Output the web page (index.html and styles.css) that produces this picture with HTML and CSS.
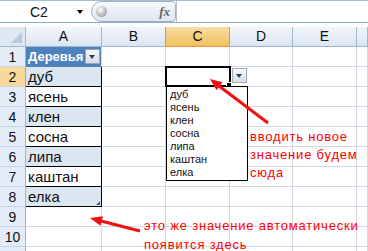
FILE: index.html
```html
<!DOCTYPE html>
<html lang="ru">
<head>
    <meta charset="UTF-8">
    <meta name="viewport" content="width=device-width, initial-scale=1.0">
    <title>Список</title>
    <link rel="stylesheet" href="styles.css">
</head>
<body>
    <div class="fbar">
        <div class="namebox"><span>C2</span><span class="nb-arrow"></span></div>
        <div class="fxbtn"><span class="knob"></span><span class="fx">fx</span></div>
        <div class="finput"></div>
    </div>
    <div class="sheet" id="sheet"></div>

    <div class="selbox"></div>
    <div class="ddbtn"></div>
    <div class="ddlist">
        <div>дуб</div>
        <div>ясень</div>
        <div>клен</div>
        <div>сосна</div>
        <div>липа</div>
        <div>каштан</div>
        <div>елка</div>
    </div>

    <div class="note note1">вводить новое<br>значение будем<br>сюда</div>
    <div class="note note2">это же значение автоматически<br>появится здесь</div>

    <svg class="arrows" width="368" height="251" viewBox="0 0 368 251">
        <line x1="268" y1="123" x2="219" y2="86" />
        <polygon points="210,79 222.6,82.3 216.5,90.3" />
        <line x1="140" y1="231" x2="101" y2="221" />
        <polygon points="90,218 102.9,216.2 100.4,225.8" />
    </svg>

  <script>
    const datos = ["Деревья", "дуб", "ясень", "клен", "сосна", "липа", "каштан", "елка"];
    const cols = ["A", "B", "C", "D", "E", ""];

    function dibujarHoja() {
        let html = "<div class='corner'></div>";
        for (let i = 0; i < cols.length; i++) {
            html += "<div class='ch" + (cols[i] == "C" ? " sel" : "") + "'>" + cols[i] + "</div>";
        }
        for (let r = 1; r <= 11; r++) {
            // la fila 11 queda cortada abajo, sin numero visible
            html += "<div class='rh" + (r == 2 ? " sel" : "") + "'>" + (r <= 10 ? r : "") + "</div>";
            if (r == 1) {
                html += "<div class='c head'>" + datos[0] + "<span class='filter'></span></div>";
            } else if (r <= 8) {
                html += "<div class='c t" + (r % 2 == 0 ? " band" : "") + "'>" + datos[r - 1] +
                    (r == 8 ? "<span class='grip'></span>" : "") + "</div>";
            } else {
                html += "<div class='c'></div>";
            }
            for (let k = 1; k < cols.length; k++) {
                html += "<div class='c'></div>";
            }
        }
        document.getElementById("sheet").innerHTML = html;
    }

    dibujarHoja();
  </script>
</body>
</html>
```
FILE: styles.css
```css
* {
    box-sizing: border-box;
}
body {
    margin: 0;
    width: 368px;
    height: 251px;
    overflow: hidden;
    position: relative;
    background-color: #fff;
    font-family: "Liberation Sans", Arial, sans-serif;
    color: #111;
}

/* barra de formulas */
.fbar {
    display: flex;
    height: 23px;
    border-top: 1px solid #a9bcd5;
    border-bottom: 1px solid #92a7c3;
    margin-bottom: 4px;
}
.namebox {
    width: 91px;
    display: flex;
    align-items: center;
    padding-left: 30px;
    font-size: 14px;
}
.nb-arrow {
    margin-left: auto;
    margin-right: 8px;
    width: 0;
    height: 0;
    border-left: 3.5px solid transparent;
    border-right: 3.5px solid transparent;
    border-top: 4px solid #000;
}
.fxbtn {
    width: 85px;
    display: flex;
    align-items: center;
    border: 1px solid #9fb1c9;
    border-radius: 11px 4px 4px 11px;
    background: linear-gradient(#f7f9fc, #dde5f0);
}
.knob {
    width: 11px;
    height: 11px;
    margin-left: 4px;
    border-radius: 50%;
    background: radial-gradient(circle at 40% 35%, #ffffff, #b4b4b4 60%, #8c8c8c);
}
.fx {
    margin-left: auto;
    margin-right: 5px;
    font-family: "Liberation Serif", serif;
    font-style: italic;
    font-weight: bold;
    font-size: 13px;
    color: #666;
}
.finput {
    flex: 1;
    border-left: 1px solid #b6c2d2;
}

/* hoja */
.sheet {
    display: grid;
    grid-template-columns: 26px 76px 64px 64px 63px 64px 1fr;
    grid-auto-rows: 20px;
}
.corner {
    position: relative;
    background: #dfe7f3;
    border-right: 1px solid #9eb6ce;
    border-bottom: 1px solid #9eb6ce;
}
.corner::after {
    content: "";
    position: absolute;
    right: 3px;
    bottom: 3px;
    width: 11px;
    height: 11px;
    background: #b9cae0;
    clip-path: polygon(100% 0, 100% 100%, 0 100%);
}
.ch {
    background: linear-gradient(#f3f6fb, #dce5f1);
    border-right: 1px solid #9eb6ce;
    border-bottom: 1px solid #9eb6ce;
    text-align: center;
    font-size: 14px;
    line-height: 19px;
}
.ch.sel {
    background: linear-gradient(#f9dba3, #f1c15f);
    border-right-color: #f29536;
    border-bottom-color: #f29536;
    box-shadow: -1px 0 0 #f29536;
}
.rh {
    background: #e4ecf7;
    border-right: 1px solid #9eb6ce;
    border-bottom: 1px solid #c5d3e6;
    text-align: center;
    font-size: 14px;
    line-height: 20px;
}
.rh.sel {
    background: #f9d99b;
    border-right-color: #f29536;
}
.c {
    position: relative;
    border-right: 1px solid #d0d7e5;
    border-bottom: 1px solid #d0d7e5;
    padding-left: 2px;
    font-size: 15px;
    line-height: 20px;
}
.c.head {
    display: flex;
    align-items: center;
    background: #4f81bd;
    border-bottom-color: #4f81bd;
    color: #fff;
    font-weight: bold;
    font-size: 13px;
}
.filter {
    position: relative;
    margin-left: auto;
    margin-right: 1px;
    width: 15px;
    height: 15px;
    border: 1px solid #9aa5b5;
    background: linear-gradient(#f7f7f7, #d9dde4);
}
.filter::after,
.ddbtn::after {
    content: "";
    position: absolute;
    left: 3px;
    top: 5px;
    border-left: 3.5px solid transparent;
    border-right: 3.5px solid transparent;
    border-top: 4px solid #2c3f66;
}
.c.t {
    border-right-color: #000;
    border-bottom-color: #000;
}
.c.band {
    background: #dce6f1;
}
.grip {
    position: absolute;
    right: 1px;
    bottom: 1px;
    width: 0;
    height: 0;
    border-left: 4px solid transparent;
    border-bottom: 4px solid #3b5d9e;
}

/* lista desplegable */
.selbox {
    position: absolute;
    left: 165px;
    top: 66px;
    width: 66px;
    height: 21px;
    border: 2px solid #000;
}
.selbox::after {
    content: "";
    position: absolute;
    right: -3px;
    bottom: -3px;
    width: 4px;
    height: 4px;
    background: #000;
    border: 1px solid #fff;
}
.ddbtn {
    position: absolute;
    left: 232px;
    top: 68px;
    width: 15px;
    height: 15px;
    border: 1px solid #a3abb8;
    background: linear-gradient(#f7f7f7, #dadfe7);
}
.ddlist {
    position: absolute;
    left: 166px;
    top: 86px;
    width: 82px;
    border: 1px solid #000;
    background: #fff;
    padding: 1px 0 1px 3px;
    font-size: 11px;
    line-height: 13px;
}

/* notas */
.note {
    position: absolute;
    color: #f00;
    font-size: 13px;
    letter-spacing: 0.8px;
    white-space: nowrap;
}
.note1 {
    left: 250px;
    top: 128px;
    line-height: 18px;
}
.note2 {
    left: 144px;
    top: 216px;
    line-height: 19px;
}
.arrows {
    position: absolute;
    left: 0;
    top: 0;
}
.arrows line {
    stroke: #ee1111;
    stroke-width: 3;
}
.arrows polygon {
    fill: #ee1111;
}
```
